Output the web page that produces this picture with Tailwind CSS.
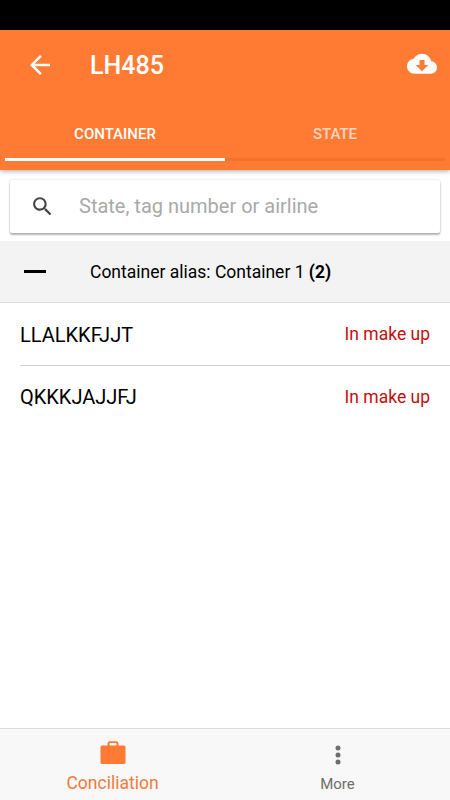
<!DOCTYPE html>
<html lang="en">

<head>
    <meta charset="UTF-8" />
    <meta name="viewport" content="width=device-width, initial-scale=1.0" />
    <title>LH485</title>

    <!-- Tailwind CSS -->
    <script src="https://cdn.jsdelivr.net/npm/@tailwindcss/browser@4"></script>
</head>

<body class="flex flex-col h-screen overflow-hidden bg-white text-black font-[Roboto,sans-serif]">

    <!-- Status bar -->
    <div class="h-[30px] shrink-0 bg-black"></div>

    <!-- Header -->
    <header class="relative h-[140px] shrink-0 bg-[#ff7b33] text-white shadow-[0_1px_5px_rgba(0,0,0,0.35)]">
        <div class="h-[70px] flex items-center pl-[25px] pr-[13px]">
            <button aria-label="Back">
                <svg class="w-[30px] h-[30px]" viewBox="0 0 24 24" fill="currentColor">
                    <path d="M20 11H7.83l5.59-5.59L12 4l-8 8 8 8 1.41-1.41L7.83 13H20v-2z" />
                </svg>
            </button>
            <h1 class="ml-[35px] pt-[2px] text-[25px] leading-[30px] font-medium">LH485</h1>
            <button class="ml-auto" aria-label="Download">
                <svg class="w-[30px] h-[30px]" viewBox="0 0 24 24" fill="currentColor">
                    <path d="M19.35 9.04C18.67 5.59 15.64 3 12 3 9.11 3 6.6 4.64 5.35 7.04 2.34 7.36 0 9.91 0 13c0 3.31 2.69 6 6 6h13c2.76 0 5-2.24 5-5 0-2.64-2.05-4.78-4.65-4.96zM17 12l-5 5-5-5h3V8h4v4h3z" />
                </svg>
            </button>
        </div>
        <nav class="h-[61px] mx-[5px] flex text-[15px] font-medium">
            <a class="flex-1 flex items-center justify-center pt-[11px] border-b-3 border-white">CONTAINER</a>
            <a class="flex-1 flex items-center justify-center pt-[11px] border-b-3 border-[#f4722d] text-white/70">STATE</a>
        </nav>
    </header>

    <!-- Content -->
    <main class="flex-1">
        <div class="mx-[10px] mt-[10px] mb-2 h-[53px] flex items-center pl-[20px] rounded-xs bg-white shadow-[0_2px_2px_rgba(0,0,0,0.28),0_0_2px_rgba(0,0,0,0.2)]">
            <svg class="w-[25px] h-[25px] text-[#444]" viewBox="0 0 24 24" fill="currentColor">
                <path d="M15.5 14h-.79l-.28-.27C15.41 12.59 16 11.11 16 9.5 16 5.91 13.09 3 9.5 3S3 5.91 3 9.5 5.91 16 9.5 16c1.61 0 3.09-.59 4.23-1.57l.27.28v.79l5 4.99L20.49 19l-4.99-5zm-6 0C7.01 14 5 11.99 5 9.5S7.01 5 9.5 5 14 7.01 14 9.5 11.99 14 9.5 14z" />
            </svg>
            <span class="ml-6 pb-[2px] text-[20px] text-[#a9a9a9]">State, tag number or airline</span>
        </div>

        <div class="h-[62px] flex items-center border-b border-[#dcdcdc] bg-[#f3f3f3] pl-6">
            <span class="w-[22px] h-[3px] bg-black"></span>
            <span class="ml-11 pt-[2px] text-[17.5px]">Container alias: Container 1 <b>(2)</b></span>
        </div>

        <ul class="pl-5">
            <li class="h-[63px] flex items-center justify-between pr-5 border-b border-[#d2d2d2]">
                <span class="pt-px text-[20px]">LLALKKFJJT</span>
                <span class="text-[17.5px] text-[#c40d0d]">In make up</span>
            </li>
            <li class="h-[62px] flex items-center justify-between pr-5">
                <span class="text-[20px]">QKKKJAJJFJ</span>
                <span class="text-[17.5px] text-[#c40d0d]">In make up</span>
            </li>
        </ul>
    </main>

    <!-- Bottom tabs -->
    <footer class="h-[72px] shrink-0 flex border-t border-[#dcdcdc] bg-[#f8f8f8]">
        <a class="flex-1 flex flex-col items-center pt-[10px] text-[#ff7b33]">
            <svg class="w-[30px] h-[30px]" viewBox="0 0 30 30" fill="currentColor">
                <path d="M4 6.5h5.5V4.5q0-2.2 2.2-2.2h6.6q2.2 0 2.2 2.2v2H26q1.5 0 1.5 1.5v15.5q0 1.5-1.5 1.5H4q-1.5 0-1.5-1.5V8Q2.5 6.5 4 6.5zM11.5 6.5h7V5q0-.9-.9-.9h-5.2q-.9 0-.9.9z" />
            </svg>
            <span class="mt-1 text-[17.5px] leading-5 text-[#f07a3c]">Conciliation</span>
        </a>
        <a class="flex-1 flex flex-col items-center pt-[11px] text-[#6e6e6e]">
            <svg class="w-[30px] h-[30px]" viewBox="0 0 30 30" fill="currentColor">
                <circle cx="15" cy="8" r="2.5" />
                <circle cx="15" cy="15" r="2.5" />
                <circle cx="15" cy="22" r="2.5" />
            </svg>
            <span class="mt-1 text-[15px] leading-5">More</span>
        </a>
    </footer>

</body>

</html>
